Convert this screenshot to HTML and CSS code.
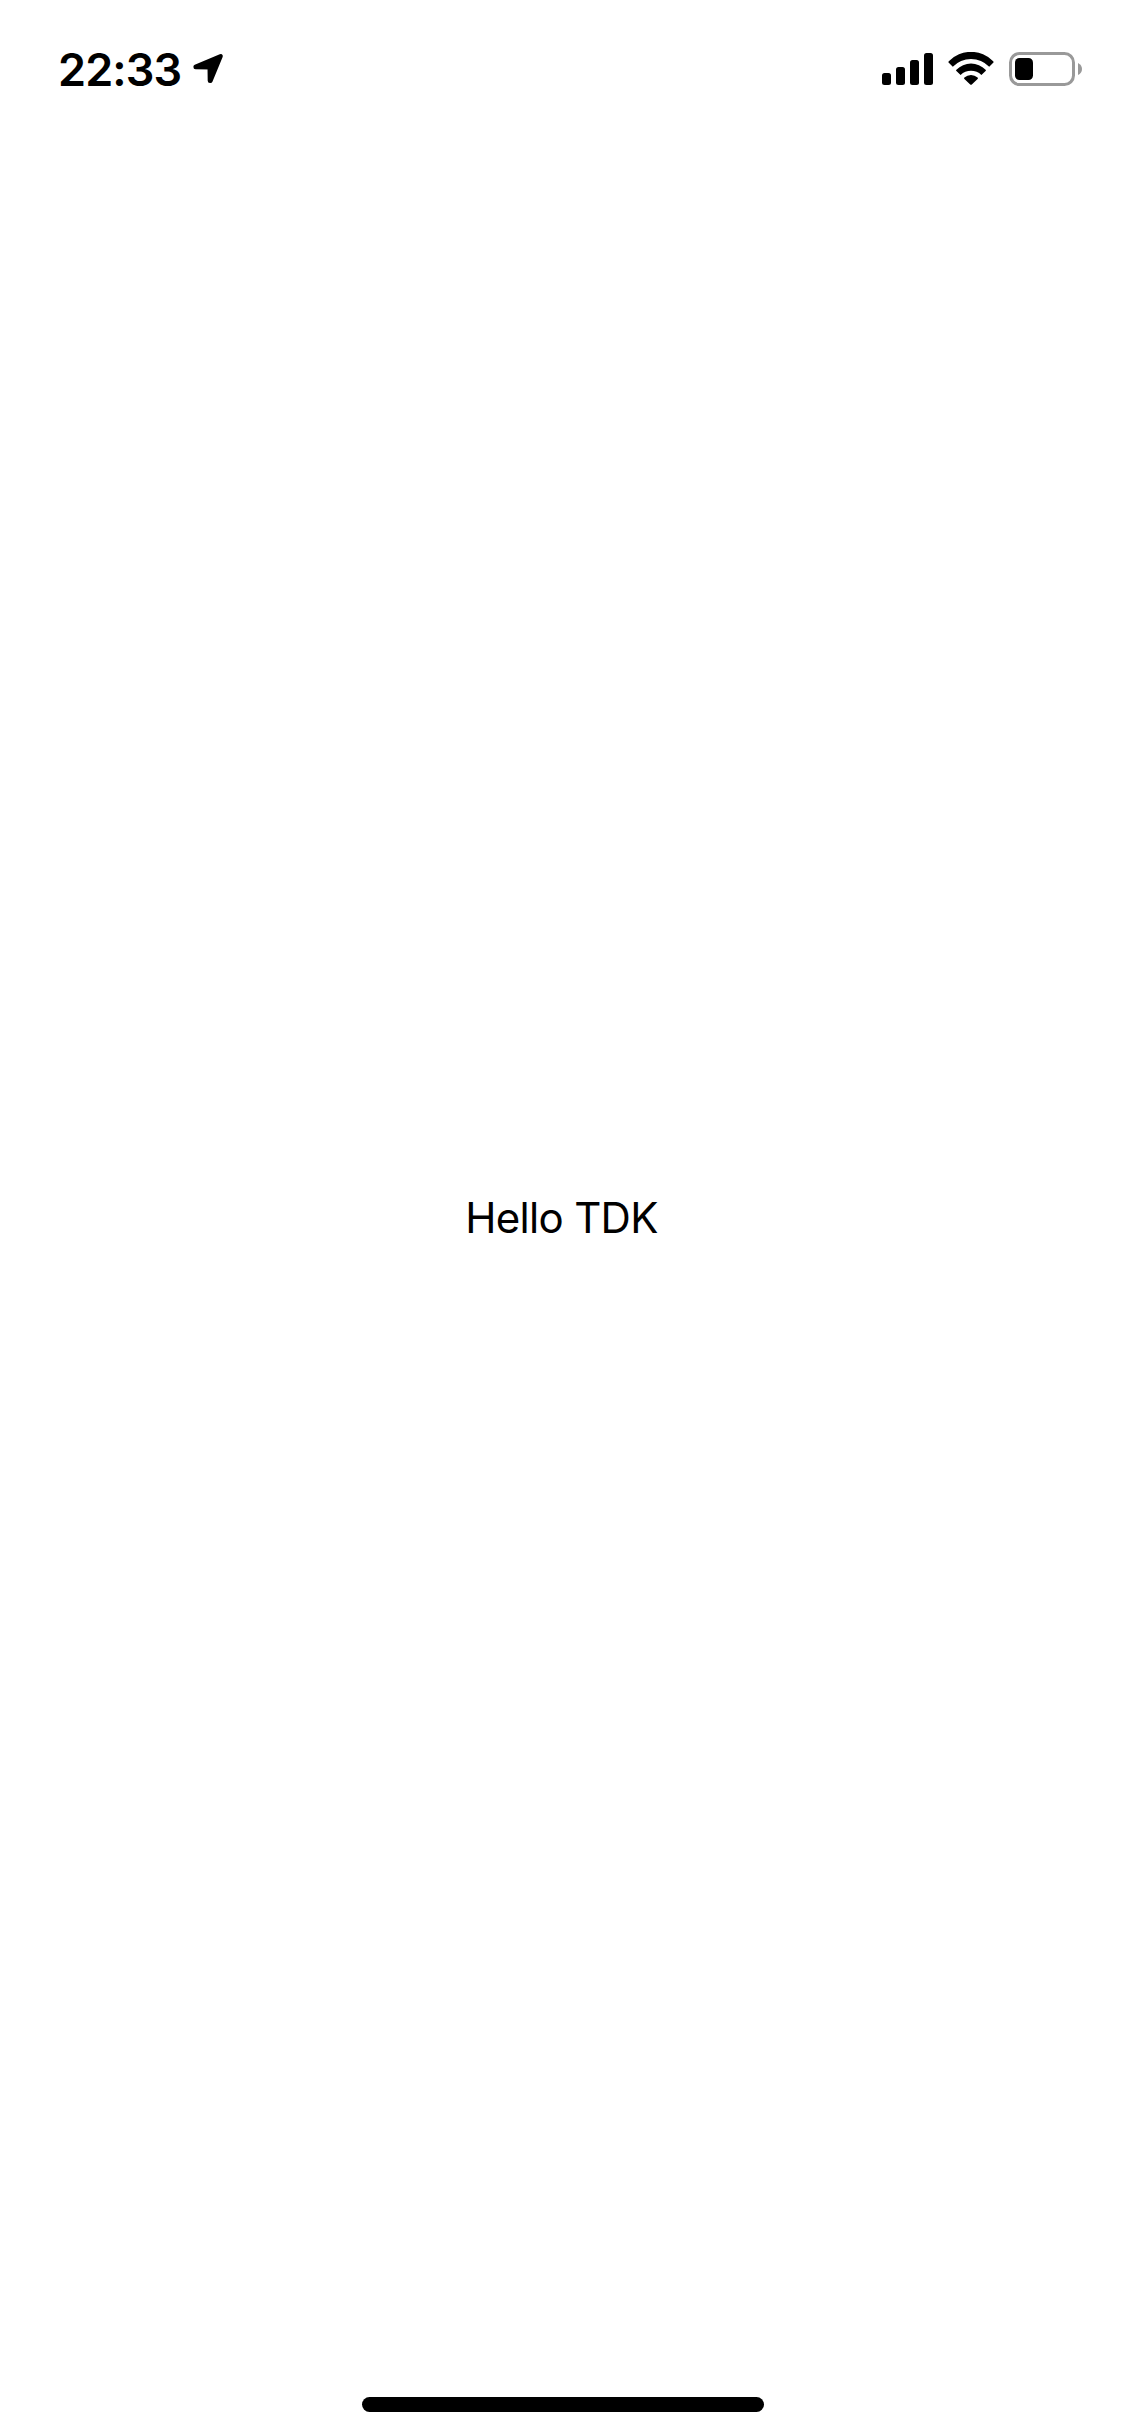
FILE: index.html
```html
<!DOCTYPE html>
<html lang="en">
<head>
<meta charset="utf-8">
<title>Hello TDK</title>
<link rel="stylesheet" href="styles.css">
</head>
<body>
<div class="screen">
  <header class="status-bar">
    <div class="status-left">
      <span class="time">22:33</span>
      <svg class="location" width="32" height="34" viewBox="0 0 32 34"><path d="M3.6 14.7 28.6 4.2 18.4 28.8 17.9 28.8 17.7 15.2 3.6 15Z" stroke="#000" stroke-width="4.4" stroke-linejoin="round"/></svg>
    </div>
    <div class="status-right">
      <svg class="signal" width="51" height="34" viewBox="0 0 51 34">
        <rect x="0" y="21" width="9" height="12" rx="2.5"/>
        <rect x="14" y="15" width="9" height="18" rx="2.5"/>
        <rect x="28" y="8" width="9" height="25" rx="2.5"/>
        <rect x="42" y="1" width="9" height="32" rx="2.5"/>
      </svg>
      <svg class="wifi" width="46" height="34" viewBox="0 0 46 34">
        <path d="M.8 9.2A31 31 0 0 1 45.2 9.2Q46 10 45.2 10.8L41.2 14.8A25.2 25.2 0 0 0 4.8 14.8L.8 10.8Q0 10 .8 9.2Z"/>
        <path d="M8.4 17.7A20.5 20.5 0 0 1 37.6 17.7Q38.4 18.4 37.6 19.1L33.4 23A15 15 0 0 0 12.6 23L8.4 19.1Q7.6 18.4 8.4 17.7Z"/>
        <path d="M16.4 25.5A9.8 9.8 0 0 1 29.6 25.5Q30.4 26.2 29.6 26.9L23.8 32.4Q23 33.2 22.2 32.4L16.4 26.9Q15.6 26.2 16.4 25.5Z"/>
      </svg>
      <svg class="battery" width="73" height="34" viewBox="0 0 73 34">
        <rect x="1.5" y="1.5" width="63" height="31" rx="9" fill="none" stroke="#999" stroke-width="3"/>
        <rect x="6" y="6" width="18" height="22" rx="4.5"/>
        <path d="M69 11Q73 13 73 17T69 23Z" fill="#999"/>
      </svg>
    </div>
  </header>
  <main class="content"><p class="greeting">Hello TDK</p></main>
  <footer class="home-area"><div class="home-indicator"></div></footer>
</div>
</body>
</html>
```

FILE: styles.css
```css
body {
  margin: 0;
  background: #fff;
  color: #000;
  font-family: Inter, "Liberation Sans", sans-serif;
}

.screen {
  display: flex;
  flex-direction: column;
  height: 2436px;
}

.status-bar {
  display: flex;
  justify-content: space-between;
  box-sizing: border-box;
  height: 132px;
  padding: 52px 43px 0 58px;
}

.status-left,
.status-right {
  display: flex;
  align-items: flex-start;
  height: 34px;
}

.time {
  width: 134px;
  font-size: 45px;
  font-weight: 600;
  line-height: 35px;
  letter-spacing: -0.9px;
  white-space: nowrap;
}

.wifi {
  margin: 0 15px;
}

.content {
  display: flex;
  flex: 1;
  align-items: center;
  justify-content: center;
}

.greeting {
  margin: 0;
  padding-right: 2px;
  font-size: 42px;
  line-height: 50px;
  letter-spacing: -0.7px;
}

.home-area {
  display: flex;
  justify-content: center;
  box-sizing: border-box;
  height: 132px;
  padding-top: 93px;
}

.home-indicator {
  width: 402px;
  height: 15px;
  border-radius: 8px;
  background: #000;
}
```
